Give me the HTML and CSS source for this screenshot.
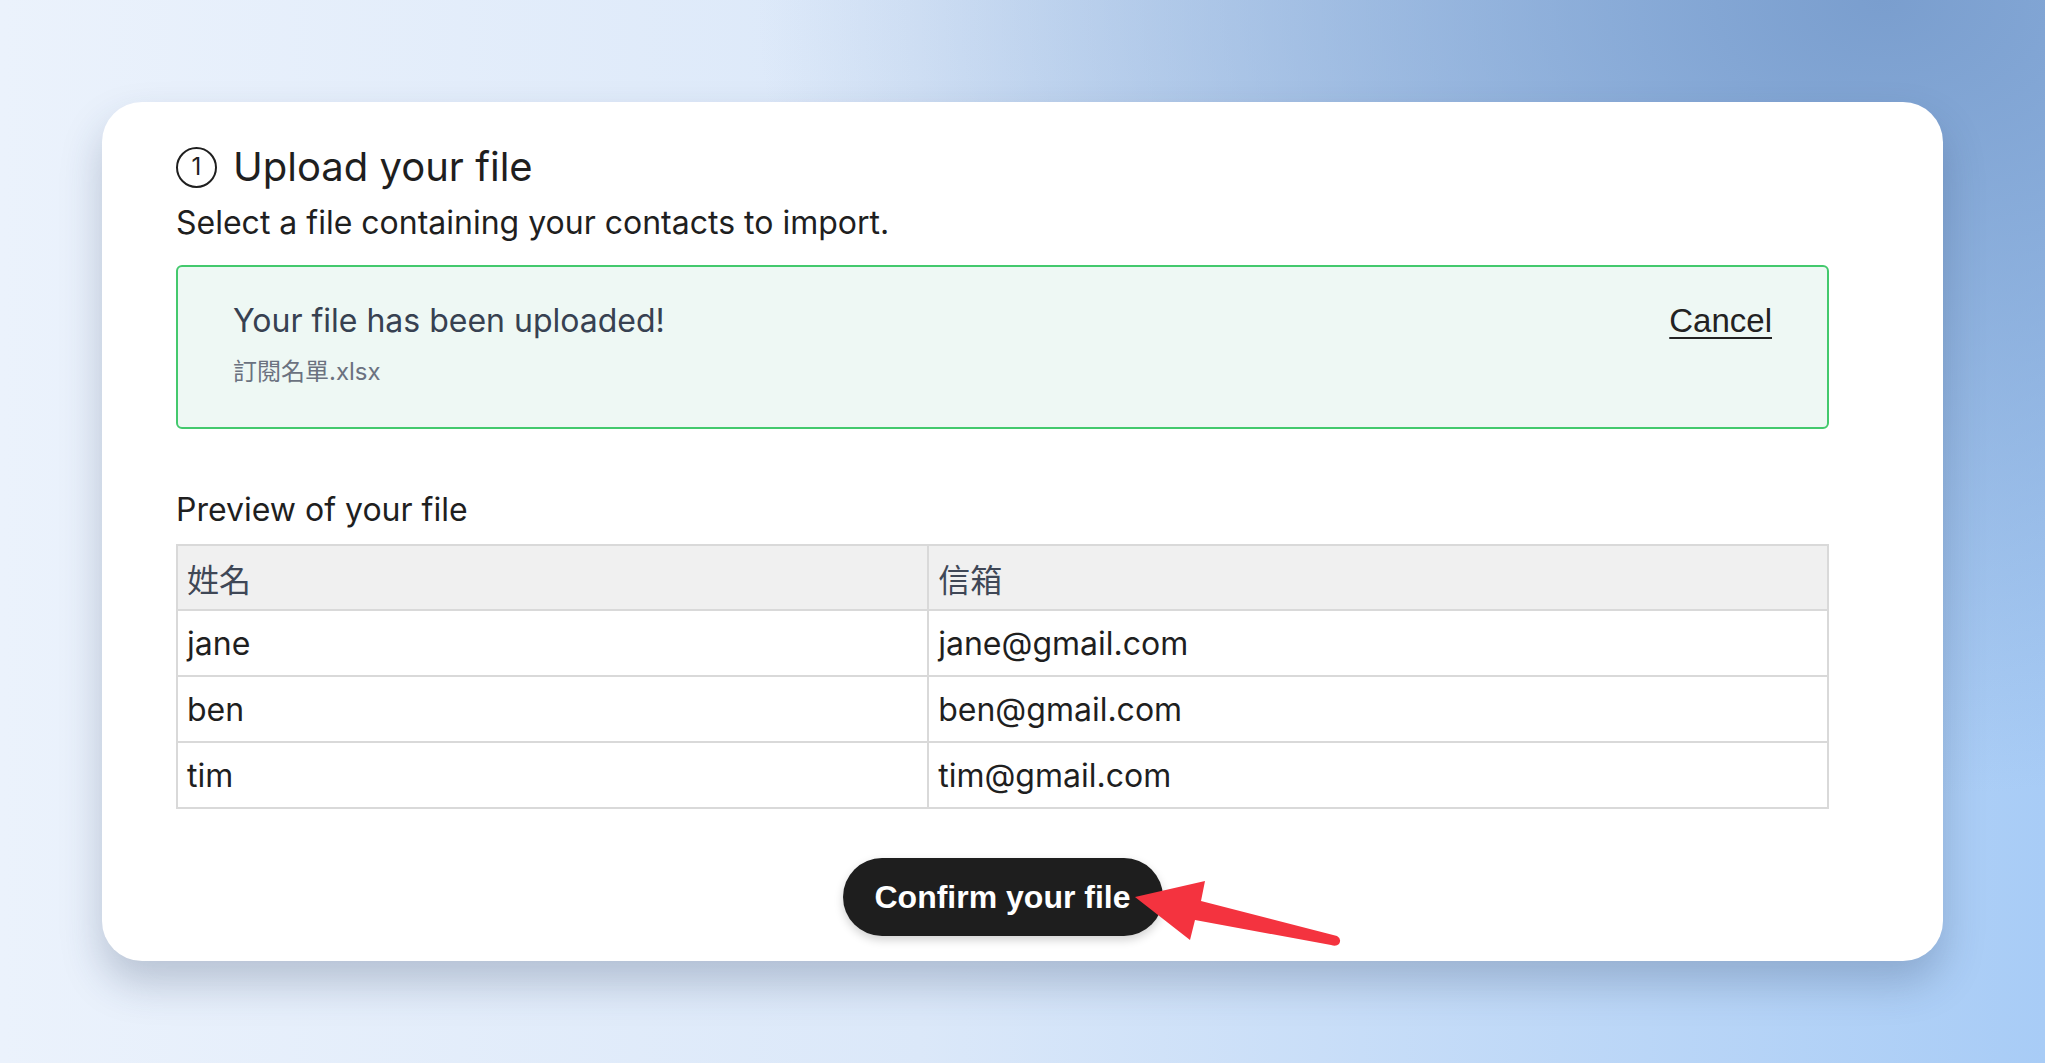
FILE: index.html
```html
<!DOCTYPE html>
<html lang="en">
<head>
    <meta charset="UTF-8">
    <meta name="viewport" content="width=device-width, initial-scale=1.0">
    <title>Import contacts</title>
    <link rel="stylesheet" href="styles.css">
</head>
<body>
    <div class="card">
        <div class="content">
            <!-- Krok 1 -->
            <h1 class="step-title"><span class="step-num">1</span>Upload your file</h1>
            <p class="step-desc">Select a file containing your contacts to import.</p>

            <div class="upload-box">
                <div class="upload-info">
                    <div class="upload-msg">Your file has been uploaded!</div>
                    <div class="upload-name">訂閱名單.xlsx</div>
                </div>
                <a href="#" class="cancel">Cancel</a>
            </div>

            <h2 class="preview-title">Preview of your file</h2>
            <table class="preview">
                <thead>
                    <tr><th class="col-name">姓名</th><th>信箱</th></tr>
                </thead>
                <tbody>
                    <tr><td>jane</td><td>jane@gmail.com</td></tr>
                    <tr><td>ben</td><td>ben@gmail.com</td></tr>
                    <tr><td>tim</td><td>tim@gmail.com</td></tr>
                </tbody>
            </table>

            <div class="actions">
                <button class="confirm">Confirm your file</button>
            </div>
        </div>

        <!-- strzałka wskazująca przycisk -->
        <svg class="pointer" width="220" height="80" viewBox="0 0 220 80">
            <path d="M2 18 L72 2 L68 22 L204 57 Q209 60 206 65 Q203 68 198 66 L62 41 L57 61 Z" fill="#f4333f"/>
        </svg>
    </div>
</body>
</html>
```

FILE: styles.css
```css
body {
    margin: 0;
    min-height: 1063px;
    font-family: Inter, "Noto Sans CJK TC", sans-serif;
    color: #1f1f1f;
    background:
        radial-gradient(ellipse 55% 75% at 92% 0%, rgba(122, 158, 206, 1) 0%, rgba(122, 158, 206, 0) 100%),
        linear-gradient(90deg, #ebf2fc 0%, #dbe8f9 45%, #a8ccf6 100%);
    padding: 102px 102px 0;
    box-sizing: border-box;
}
.card {
    position: relative;
    width: 1841px;
    height: 859px;
    background: #fff;
    border-radius: 40px;
    box-shadow: 0 22px 40px rgba(40, 60, 95, 0.25);
    padding: 40px 114px 0 74px;
    box-sizing: border-box;
}
.content {
    width: 1653px;
}
.step-title {
    display: flex;
    align-items: center;
    gap: 16px;
    margin: 0;
    font-size: 40px;
    font-weight: 400;
    line-height: 50px;
}
.step-num {
    width: 37px;
    height: 37px;
    border: 2.5px solid #1f1f1f;
    border-radius: 50%;
    display: flex;
    justify-content: center;
    align-items: center;
    font-size: 24px;
    font-weight: 400;
}
.step-desc {
    margin: 11px 0 0;
    font-size: 32px;
    line-height: 40px;
}
.upload-box {
    margin-top: 22px;
    height: 164px;
    box-sizing: border-box;
    border: 2px solid #43c96d;
    border-radius: 6px;
    background: #eef8f4;
    padding: 34px 55px 0 55px;
    display: flex;
    justify-content: space-between;
    align-items: flex-start;
}
.upload-msg {
    font-size: 32px;
    line-height: 40px;
    color: #374151;
}
.upload-name {
    margin-top: 16px;
    font-size: 24px;
    line-height: 30px;
    color: #6b7280;
}
.cancel {
    font-family: "Liberation Sans", Arial, sans-serif;
    font-size: 33px;
    line-height: 40px;
    color: #222;
    text-decoration: underline;
    text-decoration-thickness: 2px;
    text-underline-offset: 5px;
}
.preview-title {
    margin: 61px 0 0;
    font-size: 32px;
    font-weight: 400;
    line-height: 40px;
}
.preview {
    margin-top: 14px;
    width: 100%;
    border-collapse: collapse;
    font-size: 32px;
}
.preview th,
.preview td {
    border: 2px solid #d9d9d9;
    height: 64px;
    padding: 0 9px;
    text-align: left;
    font-weight: 400;
}
.preview th {
    background: #f0f0f0;
    color: #3f4756;
    height: 63px;
}
.col-name {
    width: 45.5%;
}
.actions {
    display: flex;
    justify-content: center;
    margin-top: 49px;
}
.confirm {
    font-family: "Liberation Sans", Arial, sans-serif;
    font-size: 32px;
    font-weight: bold;
    color: #fff;
    background: #1e1e1e;
    border: none;
    border-radius: 39px;
    width: 320px;
    height: 78px;
    box-shadow: 0 4px 10px rgba(0, 0, 0, 0.18);
    cursor: pointer;
}
.pointer {
    position: absolute;
    left: 1031px;
    top: 777px;
}
```
